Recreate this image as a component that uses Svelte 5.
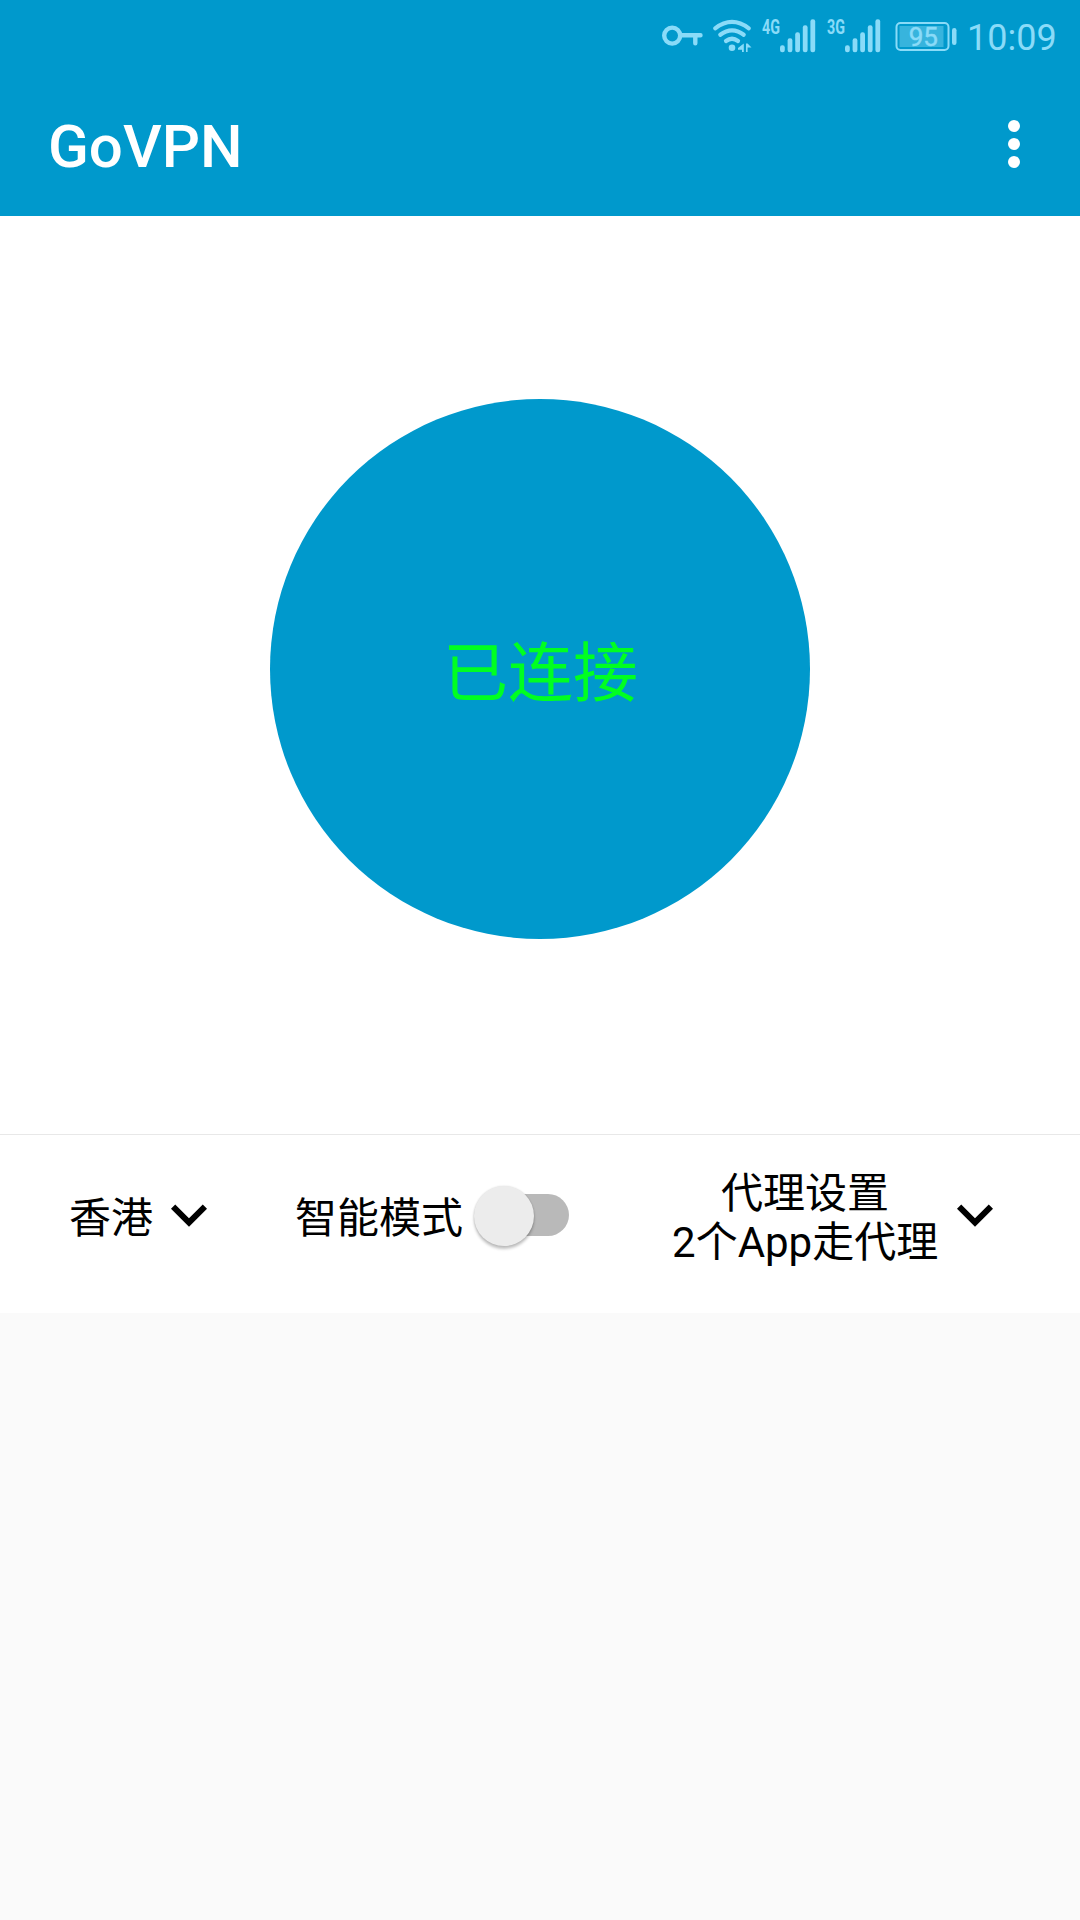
<script lang="ts">
  interface Signal {
    network: string
    bars: number[]
  }

  const signals: Signal[] = [
    { network: '4G', bars: [7, 14, 20, 27, 33] },
    { network: '3G', bars: [7, 14, 20, 27, 33] }
  ]

  let smartMode = $state(false)
  let battery = 95
  let proxyCount = 2
</script>

{#snippet chevron()}
  <svg class="chevron" viewBox="0 0 24 24" aria-hidden="true">
    <path d="M7.41 7.84L12 12.42l4.59-4.58L18 9.25l-6 6-6-6z" />
  </svg>
{/snippet}

<div class="screen">
  <header>
    <div class="status">
      <svg class="key" width="42" height="72" viewBox="0 0 42 72">
        <circle cx="10.2" cy="35.6" r="8" />
        <path d="M18.5 35.2H38.5M33.3 35.2V43.2" />
      </svg>

      <svg class="wifi" width="42" height="72" viewBox="0 0 42 72">
        <path d="M3.2 28.3Q20 15.5 36.8 28.3M8.3 34.8Q20 26 31.7 34.8M14 41Q20 36.5 26 41" />
        <circle cx="20" cy="47.8" r="3.3" />
        <path class="arrow" d="M31.8 43.5V52H30V49.8H26V48zM34 43.5H35.6L39.5 47.6H35.6V52H34z" />
      </svg>

      {#each signals as signal}
        <svg class="signal" width="55" height="72" viewBox="0 0 55 72">
          <text x="0" y="34" textLength="18" lengthAdjust="spacingAndGlyphs">{signal.network}</text>
          {#each signal.bars as height, i}
            <rect x={18 + i * 7.6} y={52.3 - height} width="4.8" {height} rx="2.2" />
          {/each}
        </svg>
      {/each}

      <svg class="battery" width="62" height="72" viewBox="0 0 62 72">
        <rect class="case" x="1.5" y="23" width="52" height="27" rx="4" />
        <rect class="level" x="4.5" y="26" width="44" height="21" />
        <rect x="57" y="28" width="4.5" height="17" rx="2.2" />
        <text x="28.3" y="46" text-anchor="middle">{battery}</text>
      </svg>

      <span class="clock">10:09</span>
    </div>

    <div class="toolbar">
      <h1>GoVPN</h1>
      <button class="menu" aria-label="menu">
        <i></i><i></i><i></i>
      </button>
    </div>
  </header>

  <main>
    <button class="connect">已连接</button>
  </main>

  <footer>
    <button class="option region">
      <span class="label">香港</span>
      {@render chevron()}
    </button>

    <button class="option smart" onclick={() => (smartMode = !smartMode)}>
      <span class="label">智能模式</span>
      <span class="switch" class:on={smartMode}><span class="thumb"></span></span>
    </button>

    <button class="option proxy">
      <span>代理设置<br />{proxyCount}个App走代理</span>
      {@render chevron()}
    </button>
  </footer>
</div>

<style>
  :global(body) {
    margin: 0;
    background: #fafafa;
  }

  .screen {
    width: 1080px;
    height: 1920px;
    overflow: hidden;
    background: #fafafa;
    font-family: Roboto, "Noto Sans CJK SC", sans-serif;
  }

  button {
    margin: 0;
    padding: 0;
    border: 0;
    background: none;
    font: inherit;
    color: inherit;
  }

  header {
    height: 216px;
    background: #0099cc;
  }

  .status {
    display: flex;
    height: 72px;
    padding-left: 662px;
    color: #8adbf8;
    fill: #8adbf8;
  }

  .status svg {
    flex: none;
  }

  .key {
    fill: none;
    stroke: #8adbf8;
    stroke-width: 4.4;
    stroke-linecap: round;
  }

  .wifi {
    margin-left: 8px;
    stroke: #8adbf8;
    stroke-width: 4.2;
    stroke-linecap: round;
  }

  .wifi path {
    fill: none;
  }

  .wifi circle {
    stroke: none;
  }

  .wifi .arrow {
    fill: #8adbf8;
    stroke: none;
  }

  .signal {
    margin-left: 8px;
    margin-right: 2px;
  }

  .signal text {
    font-size: 20.5px;
    font-weight: 700;
  }

  .battery {
    margin-left: 11px;
  }

  .battery .case {
    fill: none;
    stroke: #8adbf8;
    stroke-width: 2;
  }

  .battery .level {
    opacity: .4;
  }

  .battery text {
    font-size: 26px;
    stroke: #8adbf8;
    stroke-width: .5;
  }

  .clock {
    margin-left: 10px;
    font-size: 36px;
    line-height: 76px;
  }

  .toolbar {
    display: flex;
    align-items: center;
    justify-content: space-between;
    height: 144px;
    padding: 0 60px 0 48px;
    color: #fff;
  }

  h1 {
    margin: 6px 0 0;
    font-size: 60px;
    font-weight: 500;
    line-height: 72px;
  }

  .menu {
    display: flex;
    flex-direction: column;
    gap: 6px;
  }

  .menu i {
    width: 12px;
    height: 12px;
    border-radius: 50%;
    background: #fff;
  }

  main {
    display: flex;
    justify-content: center;
    height: 735px;
    padding-top: 183px;
    background: #fff;
  }

  .connect {
    width: 540px;
    height: 540px;
    padding: 0 0 2px 1px;
    border-radius: 50%;
    background: #0099cc;
    color: #00ff21;
    font-size: 65px;
  }

  footer {
    display: flex;
    height: 178px;
    border-top: 1px solid #e8e8e8;
    background: #fff;
    font-size: 42px;
    color: #000;
  }

  .option {
    display: flex;
    align-items: center;
    height: 164px;
    white-space: nowrap;
  }

  .label {
    padding-bottom: 6px;
  }

  .region {
    margin-left: 69px;
  }

  .smart {
    margin-left: 70px;
  }

  .proxy {
    margin-left: 103px;
    line-height: 49px;
    text-align: center;
  }

  .proxy span {
    padding-top: 2px;
  }

  .chevron {
    width: 72px;
    height: 72px;
  }

  .switch {
    box-sizing: border-box;
    width: 82px;
    height: 42px;
    margin: 0 0 4px 24px;
    border-radius: 21px;
    background: #b9b9b9;
  }

  .thumb {
    display: block;
    width: 60px;
    height: 60px;
    margin: -8px 0 0 -13px;
    border-radius: 50%;
    background: #ececec;
    box-shadow: 0 3px 3px rgba(0, 0, 0, .24), 0 0 2px rgba(0, 0, 0, .14);
  }

  .proxy .chevron {
    margin-left: 1px;
  }

  .switch.on .thumb {
    margin-left: 36px;
    background: #0099cc;
  }
</style>
